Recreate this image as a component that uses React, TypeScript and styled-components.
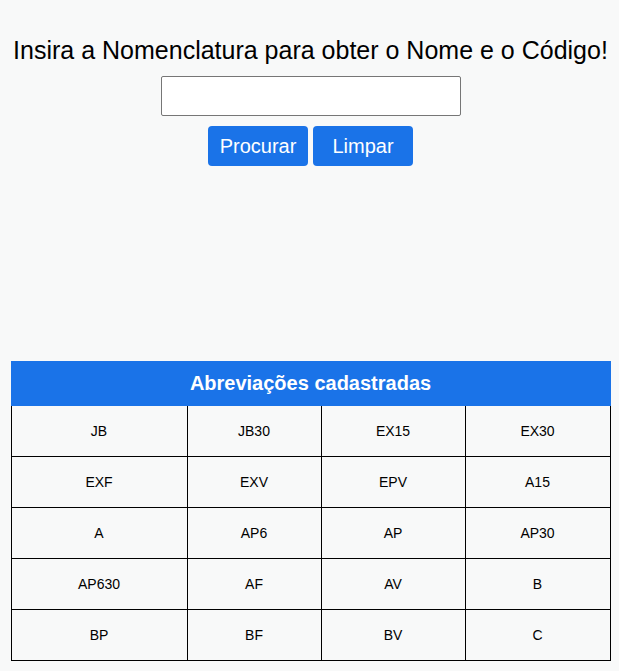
import React from "react";
import styled, { createGlobalStyle } from "styled-components";

const Global = createGlobalStyle`
  html, body { margin: 0; padding: 0; background: #f8f9f9; }
  body { font-family: "Liberation Sans", Arial, sans-serif; color: #000; }
`;

const Page = styled.div`
  display: flex;
  flex-direction: column;
  align-items: center;
  padding-top: 36px;
  padding-left: 2px;
`;

const Title = styled.h1`
  margin: 0;
  font-size: 25px;
  font-weight: 400;
  line-height: 28px;
  text-align: center;
  white-space: nowrap;
`;

const Input = styled.input`
  box-sizing: border-box;
  width: 300px;
  height: 40px;
  margin-top: 12px;
  border: 1px solid #767676;
  border-radius: 2px;
  background: #fff;
  font-size: 16px;
  padding: 0 8px;
`;

const Buttons = styled.div`
  display: flex;
  gap: 5px;
  margin-top: 10px;
`;

const Button = styled.button`
  box-sizing: border-box;
  width: 100px;
  height: 40px;
  border: none;
  border-radius: 4px;
  background: #1a73e8;
  color: #fff;
  font-family: "Liberation Sans", Arial, sans-serif;
  font-size: 20px;
  cursor: pointer;
`;

const Table = styled.table`
  width: 599px;
  margin-top: 195px;
  border-collapse: collapse;
  table-layout: fixed;
`;

const Head = styled.th`
  background: #1a73e8;
  color: #fff;
  font-size: 20px;
  font-weight: 700;
  height: 43px;
  padding: 0;
  border: 1px solid #1a73e8;
`;

const Cell = styled.td`
  border: 1px solid #000;
  height: 50px;
  padding: 0;
  text-align: center;
  font-size: 14px;
`;

const rows = [
  ["JB", "JB30", "EX15", "EX30"],
  ["EXF", "EXV", "EPV", "A15"],
  ["A", "AP6", "AP", "AP30"],
  ["AP630", "AF", "AV", "B"],
  ["BP", "BF", "BV", "C"],
];

export default function App() {
  return (
    <>
      <Global />
      <Page>
        <Title>Insira a Nomenclatura para obter o Nome e o Código!</Title>
        <Input type="text" />
        <Buttons>
          <Button>Procurar</Button>
          <Button>Limpar</Button>
        </Buttons>
        <Table>
          <colgroup>
            <col style={{ width: 176 }} />
            <col style={{ width: 134 }} />
            <col style={{ width: 144 }} />
            <col style={{ width: 145 }} />
          </colgroup>
          <thead>
            <tr>
              <Head colSpan={4}>Abreviações cadastradas</Head>
            </tr>
          </thead>
          <tbody>
            {rows.map((r, i) => (
              <tr key={i}>
                {r.map((c) => (
                  <Cell key={c}>{c}</Cell>
                ))}
              </tr>
            ))}
          </tbody>
        </Table>
      </Page>
    </>
  );
}
